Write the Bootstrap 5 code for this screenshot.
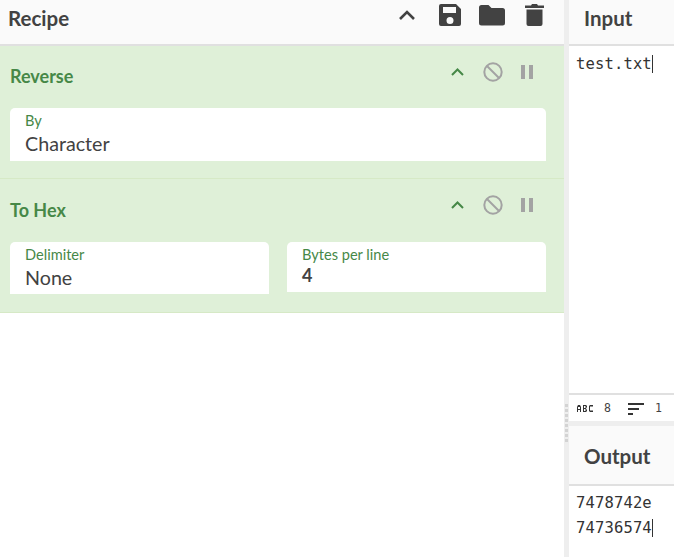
<!DOCTYPE html>
<html lang="en">
<head>
<meta charset="utf-8">
<title>Recipe</title>
<link href="https://cdn.jsdelivr.net/npm/bootstrap@5.3.0/dist/css/bootstrap.min.css" rel="stylesheet">
<style>
html,body{height:100%;overflow:hidden}
body{font-family:Lato,"Open Sans",sans-serif;color:#424242;background:#fff}
.shell{height:557px}
.recipe-pane{width:564px;flex:none}
.gutter{width:5px;flex:none;background:#eee;padding-top:404px}
.grip{width:3px;height:38px;margin-left:1px;background:repeating-linear-gradient(#d3d3d3 0 3px,#eee 3px 5px)}
.io-pane{flex:1;min-width:0}
.pane-head{height:46px;background:#fafafa;border-bottom:2px solid #e0e0e0;padding:0 8px 8px;color:#424242}
.pane-title{font-size:20.5px;font-weight:700;line-height:1}
.head-icons{margin-right:12px;margin-bottom:6px}
.head-icons svg{display:block;fill:#424242}
.op-block{background:#dff0d8;border-bottom:1px solid #d6e9c6;padding:0 18px 0 10px}
.op-reverse{height:133px}
.op-hex{height:134px}
.op-title{font-size:18px;font-weight:700;color:#468847;line-height:1}
.op-top{height:62px;padding-bottom:2px}
.op-hex .op-top{height:63px;padding-bottom:1px}
.op-icons{margin-right:10px;margin-bottom:8px}
.op-hex .op-icons{margin-bottom:11px}
.op-icons svg{display:block}
.field-box{background:#fff;border-radius:5px 5px 0 0;padding:5px 15px 0;flex:1 1 0;min-width:0}
.tall{height:53px}
.mid{height:52px}
.low{height:50px}
.field-label{font-size:14.6px;color:#468847;line-height:16px}
.field-value{font-size:19.7px;color:#424242;line-height:24px;margin-top:3px}
.low .field-value{font-size:18px;line-height:22px;margin-top:1px;font-weight:700}
.field-row{gap:18px}
.mono{font-family:"DejaVu Sans Mono","Liberation Mono",monospace;font-size:15.5px;letter-spacing:.15px;color:#333}
.input-head{padding-left:15px}
.input-body{height:347px;padding:5px 7px 4px;line-height:26px}
.caret-mark{border-right:1px solid #333}
.status{height:28px;border-top:2px solid #e0e0e0;padding:1px 0 0 8px;font-family:"DejaVu Sans Mono",monospace;font-size:11.5px;color:#424242}
.status-n{width:28px;padding-left:11px}
.status-lines{margin-left:7px}
.spacer{height:5px;background:#eee}
.output-head{height:60px;padding:2px 8px 0 15px}
.output-body{padding:5px 7px;line-height:25px}
</style>
</head>
<body>
<div class="shell d-flex">
  <div class="recipe-pane">
    <div class="pane-head d-flex align-items-center justify-content-between">
      <div class="pane-title">Recipe</div>
      <div class="head-icons d-flex align-items-center">
        <svg width="18" height="10" viewBox="0 0 18 10" style="margin-right:22px;fill:none"><path d="M2 9 9 2l7 7" stroke="#424242" stroke-width="2.6" fill="none"/></svg>
        <svg width="24" height="24" viewBox="0 0 24 24" style="margin-right:17px"><path d="M3 1h15l5 5v15a2 2 0 0 1-2 2H3a2 2 0 0 1-2-2V3a2 2 0 0 1 2-2Zm2 3v6h13V4H5Zm7 10a3.500 3.500 0 1 0 0 7 3.500 3.500 0 0 0 0-7Z" fill-rule="evenodd"/></svg>
        <svg width="26" height="22" viewBox="0 0 26 22" style="margin-right:20px"><path d="M2.500 1h7l3 3h11A2.500 2.500 0 0 1 26 6.500V19a2.500 2.500 0 0 1-2.500 2.500h-21A2.500 2.500 0 0 1 0 19V3.500A2.500 2.500 0 0 1 2.500 1Z"/></svg>
        <svg width="19" height="24" viewBox="0 0 19 24"><path d="M0 2.500h6L7 1h5l1 1.500h6V5H0ZM1.500 6.500h16V21a2 2 0 0 1-2 2h-12a2 2 0 0 1-2-2Z"/></svg>
      </div>
    </div>

    <div class="op-block op-reverse">
      <div class="op-top d-flex align-items-center justify-content-between">
        <div class="op-title">Reverse</div>
        <div class="op-icons d-flex align-items-center">
          <svg width="13" height="8" viewBox="0 0 13 8" style="margin-right:19px"><path d="M1 7l5.500-5.500L12 7" stroke="#468847" stroke-width="2" fill="none"/></svg>
          <svg width="20" height="20" viewBox="0 0 20 20" style="margin-right:17px"><circle cx="10" cy="10" r="8.700" stroke="#a3a3a3" stroke-width="2" fill="none"/><path d="M4 4l12 12" stroke="#a3a3a3" stroke-width="2"/></svg>
          <svg width="14" height="14" viewBox="0 0 14 14" style="margin-right:2px"><path d="M1 0h4v14H1zM9 0h4v14H9z" fill="#a3a3a3"/></svg>
        </div>
      </div>
      <div class="d-flex">
        <div class="field-box tall">
          <div class="field-label">By</div>
          <div class="field-value">Character</div>
        </div>
      </div>
    </div>

    <div class="op-block op-hex">
      <div class="op-top d-flex align-items-center justify-content-between">
        <div class="op-title">To Hex</div>
        <div class="op-icons d-flex align-items-center">
          <svg width="13" height="8" viewBox="0 0 13 8" style="margin-right:19px"><path d="M1 7l5.500-5.500L12 7" stroke="#468847" stroke-width="2" fill="none"/></svg>
          <svg width="20" height="20" viewBox="0 0 20 20" style="margin-right:17px"><circle cx="10" cy="10" r="8.700" stroke="#a3a3a3" stroke-width="2" fill="none"/><path d="M4 4l12 12" stroke="#a3a3a3" stroke-width="2"/></svg>
          <svg width="14" height="14" viewBox="0 0 14 14" style="margin-right:2px"><path d="M1 0h4v14H1zM9 0h4v14H9z" fill="#a3a3a3"/></svg>
        </div>
      </div>
      <div class="d-flex align-items-start field-row">
        <div class="field-box mid">
          <div class="field-label">Delimiter</div>
          <div class="field-value">None</div>
        </div>
        <div class="field-box low">
          <div class="field-label">Bytes per line</div>
          <div class="field-value">4</div>
        </div>
      </div>
    </div>
  </div>

  <div class="gutter"><div class="grip"></div></div>

  <div class="io-pane d-flex flex-column">
    <div class="pane-head input-head d-flex align-items-center">
      <div class="pane-title">Input</div>
    </div>
    <div class="input-body mono"><span class="caret-mark">test.txt</span></div>
    <div class="status d-flex align-items-center">
      <svg width="16" height="7" viewBox="0 0 16 7" aria-hidden="true"><path d="M0 7V2l1-2h2l1 2v5H3V5H1v2Zm1-3h2V2H1ZM6 0h3l1 1v1L9 3.500 10 5v1L9 7H6Zm1 1v2h1.500V1Zm0 3v2h1.500V4ZM12 1l1-1h3v1.500h-3v4h3V7h-3l-1-1Z" fill="#333"/></svg>
      <span class="status-n">8</span>
      <svg width="16" height="12" viewBox="0 0 16 12" class="status-lines" aria-hidden="true"><path d="M0 0h16v2H0zM0 5h11v2H0zM0 10h5v2H0z" fill="#333"/></svg>
      <span class="status-n">1</span>
    </div>
    <div class="spacer"></div>
    <div class="pane-head output-head d-flex align-items-center">
      <div class="pane-title">Output</div>
    </div>
    <div class="output-body mono">7478742e<br><span class="caret-mark">74736574</span></div>
  </div>
</div>
<script src="https://cdn.jsdelivr.net/npm/bootstrap@5.3.0/dist/js/bootstrap.bundle.min.js"></script>
</body>
</html>
